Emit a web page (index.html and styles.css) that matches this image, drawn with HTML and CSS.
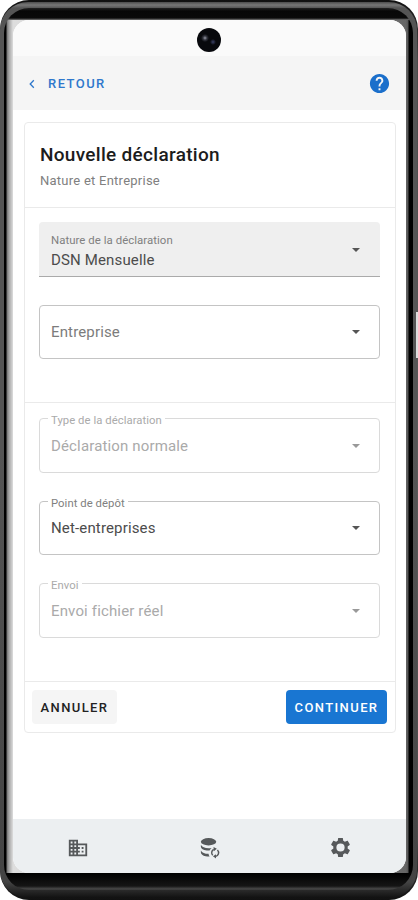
FILE: index.html
```
<!DOCTYPE html>
<html lang="fr">
<head>
  <meta charset="UTF-8">
  <meta name="viewport" content="width=device-width, initial-scale=1.0">
  <title>Nouvelle déclaration</title>
  <link rel="stylesheet" href="styles.css">
</head>
<body>
  <div class="phone">
    <div class="rim">
      <div class="bezel">
        <div class="screen">
          <div class="status-bar">
            <div class="camera"></div>
          </div>

          <header class="app-bar">
            <a class="back">
              <svg width="8" height="10" viewBox="0 0 8 10"><path d="M5.8 1.2 2.2 5l3.6 3.8" fill="none" stroke="currentColor" stroke-width="1.3"/></svg>
              <span>RETOUR</span>
            </a>
            <svg class="help" width="23" height="23" viewBox="0 0 24 24"><path fill="currentColor" d="M12 2C6.48 2 2 6.48 2 12s4.48 10 10 10 10-4.48 10-10S17.52 2 12 2zm1 17h-2v-2h2v2zm2.07-7.75l-.9.92C13.45 12.9 13 13.5 13 15h-2v-.5c0-1.1.45-2.1 1.17-2.83l1.24-1.26c.37-.36.59-.86.59-1.41 0-1.1-.9-2-2-2s-2 .9-2 2H8c0-2.21 1.79-4 4-4s4 1.79 4 4c0 .88-.36 1.68-.93 2.25z"/></svg>
          </header>

          <main class="content">
            <div class="card">
              <div class="card-header">
                <h1>Nouvelle déclaration</h1>
                <p>Nature et Entreprise</p>
              </div>

              <div class="card-section first">
                <div class="field filled">
                  <div class="field-text">
                    <span class="field-label">Nature de la déclaration</span>
                    <span class="field-value">DSN Mensuelle</span>
                  </div>
                  <i class="arrow"></i>
                </div>
                <div class="field outlined empty">
                  <span class="field-value">Entreprise</span>
                  <i class="arrow"></i>
                </div>
              </div>

              <div class="card-section second">
                <div class="field outlined disabled">
                  <span class="field-label">Type de la déclaration</span>
                  <span class="field-value">Déclaration normale</span>
                  <i class="arrow"></i>
                </div>
                <div class="field outlined">
                  <span class="field-label">Point de dépôt</span>
                  <span class="field-value">Net-entreprises</span>
                  <i class="arrow"></i>
                </div>
                <div class="field outlined disabled">
                  <span class="field-label">Envoi</span>
                  <span class="field-value">Envoi fichier réel</span>
                  <i class="arrow"></i>
                </div>
              </div>

              <div class="card-actions">
                <button class="cancel">ANNULER</button>
                <button class="primary">CONTINUER</button>
              </div>
            </div>
          </main>

          <nav class="bottom-nav">
            <!-- companies -->
            <svg width="22" height="22" viewBox="0 0 24 24"><path fill="currentColor" d="M12 7V3H2v18h20V7H12zM6 19H4v-2h2v2zm0-4H4v-2h2v2zm0-4H4V9h2v2zm0-4H4V5h2v2zm4 12H8v-2h2v2zm0-4H8v-2h2v2zm0-4H8V9h2v2zm0-4H8V5h2v2zm10 12h-8v-2h2v-2h-2v-2h2v-2h-2V9h8v10zm-2-8h-2v2h2v-2zm0 4h-2v2h2v-2z"/></svg>
            <!-- database sync -->
            <svg width="23" height="23" viewBox="0 0 24 24">
              <ellipse cx="11" cy="6" rx="8" ry="3.8" fill="currentColor"/>
              <path fill="currentColor" d="M3 9.2c1 2.3 4.300 3.600 8 3.600 1.100 0 2.200-.1 3.200-.3-1 .7-1.700 1.600-2.100 2.500C7.500 15.300 3 14 3 11.200zM3 15c1.100 2.200 4.200 3.500 8 3.600.1 1 .5 2 1.100 2.900C7.200 21.700 3 20 3 17z"/>
              <path fill="none" stroke="currentColor" stroke-width="1.5" d="M15.400 20.200a4 4 0 0 1 1-6.300M20.300 14.600a4 4 0 0 1-2.300 6.800"/>
              <path fill="currentColor" d="m16.200 11.600 3.500 1.700-3.200 2.500zM18.800 19v4.400L15.600 21z"/>
            </svg>
            <!-- settings -->
            <svg width="23" height="23" viewBox="0 0 24 24"><path fill="currentColor" fill-rule="evenodd" d="M19.430 12.980c.04-.32.07-.64.07-.98s-.03-.66-.07-.98l2.110-1.650c.19-.15.24-.42.12-.64l-2-3.460c-.12-.22-.39-.3-.61-.22l-2.490 1c-.52-.4-1.080-.73-1.690-.98l-.38-2.650C14.460 2.180 14.250 2 14 2h-4c-.25 0-.46.18-.49.42l-.38 2.650c-.61.25-1.170.59-1.690.98l-2.490-1c-.23-.09-.49 0-.61.22l-2 3.460c-.13.22-.07.49.12.64l2.110 1.650c-.04.32-.07.65-.07.98s.03.66.07.98l-2.110 1.650c-.19.15-.24.42-.12.64l2 3.460c.12.22.39.3.61.22l2.490-1c.52.4 1.080.73 1.690.98l.38 2.650c.03.24.24.42.49.42h4c.25 0 .46-.18.49-.42l.38-2.650c.61-.25 1.170-.59 1.690-.98l2.490 1c.23.09.49 0 .61-.22l2-3.460c.12-.22.07-.49-.12-.64l-2.110-1.650zM12 16.300a4.300 4.300 0 1 1 0-8.600 4.300 4.300 0 0 1 0 8.600z"/></svg>
          </nav>
        </div>
      </div>
    </div>
    <div class="side-button"></div>
  </div>
</body>
</html>
```
FILE: styles.css
```
* {
  box-sizing: border-box;
}

body {
  margin: 0;
  background-color: #fff;
  font-family: Roboto, sans-serif;
  color: #1c1c1c;
}

/* device frame */
.phone {
  position: relative;
  width: 418px;
  height: 900px;
  padding: 2px 1px 2px 0;
  border-radius: 29px;
  background: linear-gradient(to bottom, #111 0, #4a4a4a 60px, #5a5a5a 450px, #4a4a4a 840px, #111 100%);
  overflow: hidden;
}

.rim {
  height: 896px;
  padding: 6px 4px 8px 4px;
  border-radius: 28px;
  background: linear-gradient(to bottom, #4c4c4c 0, #777 3px, #555 6px, #555 50%, #444 880px, #111 100%);
}

.bezel {
  height: 882px;
  padding: 12px 7px 17px 9px;
  border-radius: 25px;
  background:
    linear-gradient(#222, #080808 3px, #0a0a0a 10px, #777 12px) 0 0 / 100% 12px no-repeat,
    linear-gradient(#000, #151515 13px, #4a4a4a 16px, #333) 0 100% / 100% 17px no-repeat,
    linear-gradient(to right, #000 0, #000 2px, #777 3px, #a5a5a5 5px, #ddd 9px, #c8c8c8 50%, #666 calc(100% - 7px), #555 calc(100% - 5px), #000 calc(100% - 4px), #000 100%);
}

.side-button {
  position: absolute;
  top: 312px;
  right: 0;
  width: 2px;
  height: 46px;
  background-color: #ddd;
}

.screen {
  height: 853px;
  display: flex;
  flex-direction: column;
  background-color: #fff;
  border-radius: 16px;
  overflow: hidden;
}

.status-bar {
  height: 36px;
  padding: 8px 2px 0 0;
  background-color: #fafafa;
}

.camera {
  width: 24px;
  height: 24px;
  margin: 0 auto;
  border-radius: 50%;
  background:
    radial-gradient(circle at 8px 10px, #9a9ca8 0, #343640 2px, transparent 4px),
    radial-gradient(circle at 16px 14px, #3c4268 0, transparent 3px),
    #08090d;
}

.app-bar {
  height: 54px;
  padding: 1px 15px 0 15px;
  display: flex;
  align-items: center;
  justify-content: space-between;
  background-color: #f5f5f5;
  color: #2f78cc;
}

.help {
  color: #1b6fcb;
}

.back {
  display: flex;
  align-items: center;
  gap: 12px;
  font-size: 13px;
  font-weight: 500;
  letter-spacing: 1.450px;
}

.content {
  flex-grow: 1;
  padding: 12px 10px 0 11px;
}

.card {
  height: 611px;
  border: 1px solid #eaeaea;
  border-radius: 4px;
}

.card-header {
  height: 85px;
  padding: 19px 15px 0;
  border-bottom: 1px solid #eaeaea;
}

.card-header h1 {
  margin: 0;
  font-size: 19px;
  line-height: 26px;
  font-weight: 500;
  letter-spacing: 0.3px;
}

.card-header p {
  margin: 4px 0 0;
  font-size: 13px;
  line-height: 18px;
  letter-spacing: 0.250px;
  color: #808080;
}

.card-section {
  padding: 14px 15px 0 14px;
  display: flex;
  flex-direction: column;
  gap: 28px;
  border-bottom: 1px solid #eaeaea;
}

.card-section.first {
  height: 195px;
}

.card-section.second {
  height: 279px;
  padding-top: 15px;
}

.field {
  position: relative;
  height: 55px;
  flex-shrink: 0;
  padding: 0 19px 0 11px;
  display: flex;
  align-items: center;
  justify-content: space-between;
  border: 1px solid #c4c4c4;
  border-radius: 4px;
}

.field.outlined {
  height: 54px;
}

.second .field.outlined {
  height: 54.500px;
  padding-top: 1px;
}

.field-label {
  font-size: 11.4px;
  line-height: 14px;
  letter-spacing: 0.050px;
  color: #808080;
}

.field-value {
  font-size: 15px;
  line-height: 20px;
  letter-spacing: 0.150px;
  color: #4c4c4c;
}

.field.filled {
  padding: 0 20px 0 12px;
  background-color: #efefef;
  border-width: 0 0 1px;
  border-color: #aaa;
  border-radius: 4px 4px 0 0;
}

.field-text {
  display: flex;
  flex-direction: column;
  gap: 3px;
  padding-top: 5px;
}

.filled .arrow {
  margin-top: 2px;
}

/* label cut into the outline */
.field.outlined .field-label {
  position: absolute;
  top: -5px;
  left: 8px;
  padding: 0 3px;
  background-color: #fff;
  font-size: 11.300px;
  line-height: 14px;
}

.field.empty .field-value {
  color: #7c7c7c;
}

.field.disabled {
  border-color: #dadada;
}

.field.disabled .field-label,
.field.disabled .field-value {
  color: #aaa;
}

.arrow {
  border: 4.500px solid transparent;
  border-top-color: #555;
  border-bottom-width: 0;
}

.field.disabled .arrow {
  border-top-color: #999;
}

.card-actions {
  padding: 8px 8px 0 7px;
  display: flex;
  justify-content: space-between;
}

button {
  height: 34px;
  padding: 0;
  border: none;
  border-radius: 4px;
  font-family: inherit;
  font-size: 13px;
  font-weight: 500;
  letter-spacing: 1.400px;
}

button.cancel {
  width: 85px;
  background-color: #f5f5f5;
  color: #222;
}

button.primary {
  width: 101px;
  background-color: #1976d2;
  color: #fff;
}

.bottom-nav {
  height: 54px;
  padding: 3px 54px 0 54px;
  display: flex;
  align-items: center;
  justify-content: space-between;
  background-color: #eceff1;
  color: #56595b;
}
```
